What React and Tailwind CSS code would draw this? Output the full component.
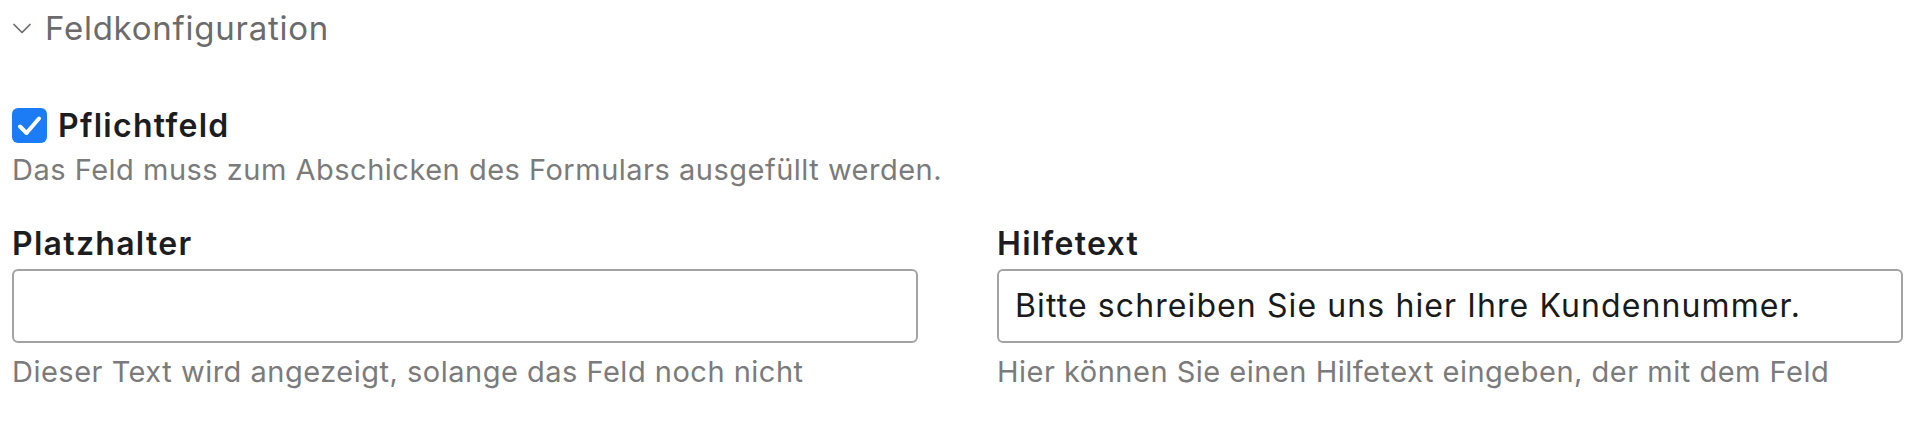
import { useState } from "react";

function Field({ label, value, help }) {
    return (
        <div className="flex flex-col">
            <label className="text-[32px] leading-[36px] font-semibold tracking-[1.3px] text-[#1d1d1f] mt-[39px]">{label}</label>
            <div className="mt-[7px] h-[74px] rounded-[6px] border-2 border-[#a3a3a3] bg-white flex items-center px-[16px]">
                <span className="text-[32px] tracking-[1.1px] text-[#1a1a1a] whitespace-nowrap">{value}</span>
            </div>
            <p className="mt-[12px] text-[29px] leading-[34px] tracking-[0.5px] text-[#7b7b7b] whitespace-nowrap">{help}</p>
        </div>
    );
}

export default function App() {
    const [required] = useState(true);

    return (
        <div className="w-[1920px] h-[421px] overflow-hidden bg-white pl-[12px] pr-[17px] font-['Inter',sans-serif]">
            <div className="flex items-center pt-[8px] h-[48px]">
                <svg width="18" height="11" viewBox="0 0 18 11" className="ml-[1px] mr-[14px]">
                    <polyline points="1,1.5 9,9.5 17,1.5" fill="none" stroke="#6b6b6b" strokeWidth="1.7" strokeLinecap="round" strokeLinejoin="round" />
                </svg>
                <h2 className="text-[33px] leading-[40px] tracking-[0.75px] text-[#6b6b6b]">Feldkonfiguration</h2>
            </div>

            <div className="mt-[60px] flex items-center h-[35px] gap-[11px]">
                <div className="w-[35px] h-[35px] rounded-[6px] bg-[#1b7cf6]">
                    {required && (
                        <svg width="35" height="35" viewBox="0 0 35 35">
                            <polyline points="8,18.5 14.5,25 27,10.5" fill="none" stroke="white" strokeWidth="4" strokeLinecap="round" strokeLinejoin="round" />
                        </svg>
                    )}
                </div>
                <span className="text-[32px] font-semibold tracking-[1.3px] text-[#1d1d1f]">Pflichtfeld</span>
            </div>
            <p className="mt-[10px] text-[29px] leading-[34px] tracking-[0.5px] text-[#7b7b7b]">
                Das Feld muss zum Abschicken des Formulars ausgefüllt werden.
            </p>

            <div className="grid grid-cols-2 gap-x-[79px]">
                <Field label="Platzhalter" value="" help="Dieser Text wird angezeigt, solange das Feld noch nicht" />
                <Field label="Hilfetext" value="Bitte schreiben Sie uns hier Ihre Kundennummer." help="Hier können Sie einen Hilfetext eingeben, der mit dem Feld" />
            </div>
        </div>
    );
}
